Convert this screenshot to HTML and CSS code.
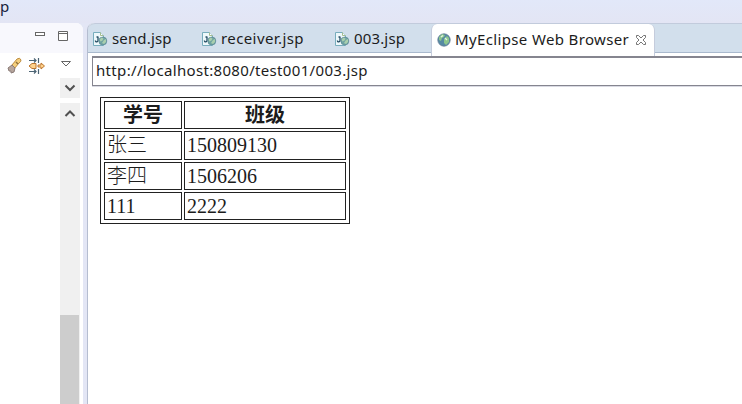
FILE: index.html
```
<!DOCTYPE html>
<html>
    <head>
        <meta charset="utf-8">
        <title>003.jsp</title>
        <link rel="stylesheet" href="styles.css">
    </head>
    <body>
        <svg class="defs">
            <symbol id="jsp" viewBox="0 0 16 16">
                <path d="M1.500 1.500h7l3 3v10h-10z" fill="#eef8fb" stroke="#78adbd"/>
                <path d="M8.500 1.500v3h3" fill="#fff" stroke="#a5bd91"/>
                <path d="M6 5.500v4q0 1.300-1.300 1.300T3.400 9.500M4.500 6h1.500" fill="none" stroke="#244c63" stroke-width="1.300"/>
                <circle cx="10.800" cy="10" r="4" fill="#70a4a3" stroke="#547f91" stroke-width=".6"/>
                <path d="M7.500 8.500l2-2 2 1-1 2-2 1zM12 9l2-1v3l-2 2-2-1z" fill="#a9cfae"/>
            </symbol>
            <symbol id="globe" viewBox="0 0 14 14">
                <circle cx="7" cy="7" r="6.200" fill="#568aa3" stroke="#627b96" stroke-width=".8"/>
                <path d="M2 4l3-3 3 1-1 2-2 1-1 3-2-1zM7 6l3-3 2 2v4l-3 3-2-2z" fill="#8cc68c"/>
                <path d="M4 4l2-1.500M8 5l2 2" stroke="#e3f2e5" stroke-width="1.300"/>
            </symbol>
        </svg>

        <div id="titleBar">p</div>
        <div id="workbench">
            <div id="sideView">
                <div class="viewTabs">
                    <svg width="12" height="14"><rect x="1.500" y="4.500" width="9" height="3" fill="#fff" stroke="#666"/></svg>
                    <svg width="12" height="14"><path d="M1.500 3.500h9v9h-9zM1.500 5.500h9" fill="#fff" stroke="#666"/></svg>
                </div>
                <div class="viewTools">
                    <svg width="16" height="18" viewBox="0 0 16 18">
                        <path d="M5 8l5-6q3-2 4 1 0 2-2 3l-5 6z" fill="#f5cf7d" stroke="#bd8c3e"/>
                        <path d="M1 11l4-3 3 3-1 4-3 1q1-3-2-2z" fill="#b7a69d" stroke="#8a7b77"/>
                        <path d="M9 5l2 2" stroke="#8d713e" stroke-width="1.500"/>
                    </svg>
                    <svg width="18" height="18" viewBox="0 0 18 18">
                        <path d="M1 3.500h7M6 1.500l2 2-2 2M1 14.500h7M6 12.500l2 2-2 2M10.500 1v5M10.500 12v5" fill="none" stroke="#4c6474" stroke-width="1.200"/>
                        <path d="M1 9l3-2.500h4v5H4zM10 8h3V6l3.500 3-3.500 3v-2h-3z" fill="#ffd28c" stroke="#bd7730"/>
                    </svg>
                    <svg class="menu" width="12" height="8"><path d="M1.500 1.500h9L6 6z" fill="#fff" stroke="#666"/></svg>
                </div>
                <div class="scroll">
                    <div class="arrow down"><svg width="12" height="8"><path d="M1.500 1.500L6 6l4.500-4.500" fill="none" stroke="#505050" stroke-width="2"/></svg></div>
                    <div class="track">
                        <svg width="12" height="8"><path d="M1.500 6L6 1.500 10.500 6" fill="none" stroke="#505050" stroke-width="2"/></svg>
                        <div class="thumb"></div>
                    </div>
                </div>
            </div>

            <div id="editor">
                <div id="tabs">
                    <div class="tab send"><svg><use href="#jsp"/></svg><span>send.jsp</span></div>
                    <div class="tab receiver"><svg><use href="#jsp"/></svg><span>receiver.jsp</span></div>
                    <div class="tab page"><svg><use href="#jsp"/></svg><span>003.jsp</span></div>
                    <div class="tab active">
                        <svg><use href="#globe"/></svg><span>MyEclipse Web Browser</span>
                        <svg class="close" viewBox="0 0 12 12"><path d="M1.500 1.500h2L6 4l2.500-2.500h2v2L8 6l2.500 2.500v2h-2L6 8l-2.500 2.500h-2v-2L4 6 1.500 3.500z" fill="#fff" stroke="#666" stroke-width=".9"/></svg>
                    </div>
                </div>
                <div id="address"><span>http://localhost:8080/test001/003.jsp</span></div>
                <div id="content">
                    <table>
                        <tr><th>学号</th><th>班级</th></tr>
                        <tr class="tall"><td>张三</td><td>150809130</td></tr>
                        <tr><td>李四</td><td>1506206</td></tr>
                        <tr><td>111</td><td>2222</td></tr>
                    </table>
                </div>
            </div>
        </div>
    </body>
</html>
```
FILE: styles.css
```
*{
    box-sizing:border-box;
}
body{
    margin:0px;
    height:404px;
    overflow:hidden;
    display:flex;
    flex-direction:column;
    background-color:#e3e6f5;
    color:#1c1c1c;
    font-family:"Noto Sans", "Open Sans", sans-serif;
    font-size:15px;
}
svg{
    display:block;
    flex:none;
}
.defs{
    display:none;
}

#titleBar{
    height:23px;
    flex:none;
    line-height:12px;
    background:linear-gradient(#e2e8f9, #e3e5f4);
    color:#171d3c;
}
#workbench{
    flex:1;
    min-height:0;
    display:flex;
}

#sideView{
    width:83px;
    flex:none;
    margin-right:4px;
    display:flex;
    flex-direction:column;
    background-color:white;
    border-top-right-radius:7px;
}
.viewTabs{
    height:30px;
    display:flex;
    gap:11px;
    padding:5px 0px 0px 34px;
    background-color:#f8f8fd;
    border-top-right-radius:7px;
}
.viewTools{
    height:25px;
    display:flex;
    gap:5px;
    padding:4px 0px 0px 7px;
}
.menu{
    margin:3px 0px 0px 9px;
}
.scroll{
    flex:1;
    width:20px;
    margin-left:60px;
    display:flex;
    flex-direction:column;
    gap:5px;
}
.arrow{
    height:20px;
    padding:6px 0px 0px 4px;
    background-color:#f0f0f0;
}
.track{
    flex:1;
    display:flex;
    flex-direction:column;
    justify-content:space-between;
    padding-top:7px;
    background-color:#f0f0f0;
}
.track svg{
    margin-left:4px;
}
.thumb{
    height:89px;
    width:19px;
    background-color:#cdcdcd;
}

#editor{
    flex:1;
    display:flex;
    flex-direction:column;
    background-color:white;
    border-left:1px solid #b5bdd0;
    border-top-left-radius:7px;
}
#tabs{
    height:30px;
    flex:none;
    display:flex;
    background-color:#d2dfec;
    border-top:1px solid #c2cbdc;
    border-bottom:1px solid #a9b9cd;
    border-top-left-radius:7px;
}
.tab{
    display:flex;
    align-items:center;
    padding:2px 0px 0px 4px;
    white-space:nowrap;
    letter-spacing:.15px;
}
.tab svg{
    width:16px;
    height:16px;
    margin-right:4px;
}
.tab span{
    margin-top:-2px;
}
.send{
    width:109px;
}
.receiver{
    width:133px;
    letter-spacing:.4px;
}
.page{
    width:101px;
}
.active{
    width:224px;
    height:32px;
    padding:0px 0px 1px 5px;
    background-color:white;
    border:1px solid #c5ccdc;
    border-width:0px 1px;
    border-radius:6px 6px 0px 0px;
    letter-spacing:.36px;
}
.tab.active svg{
    width:14px;
    height:14px;
}
.tab.active .close{
    width:12px;
    height:12px;
    margin:0px 0px 0px 6px;
}

#address{
    height:30px;
    flex:none;
    margin:3px 0px 0px 4px;
    padding-left:3px;
    border:2px solid #85858f;
    border-width:2px 0px 1px 1px;
    box-shadow:0px 1px #d9dae3;
    line-height:25px;
    letter-spacing:.33px;
}
#content{
    padding:11px 0px 0px 12px;
}
table{
    width:250px;
    height:127px;
    table-layout:fixed;
    border:1px solid #222;
    border-spacing:2px;
    padding:1px;
    font-family:"Liberation Serif", "Noto Sans CJK SC", serif;
    font-size:20px;
    line-height:24px;
}
tr{
    height:28px;
}
.tall{
    height:29px;
}
th, td{
    border:1px solid #222;
    padding:0px 2px;
}
td{
    font-weight:300;
}
.tall td{
    padding-bottom:2px;
}
th:first-child{
    width:78px;
}
```
